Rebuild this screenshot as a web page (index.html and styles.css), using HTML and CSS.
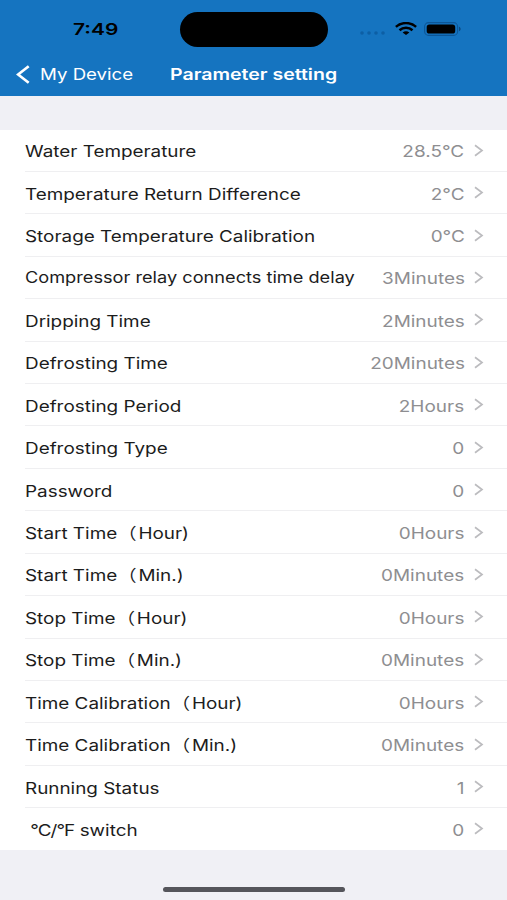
FILE: index.html
```html
<!DOCTYPE html>
<html lang="en">
<head>
<meta charset="utf-8">
<title>Parameter setting</title>
<link rel="stylesheet" href="styles.css">
</head>
<body>
<header class="header">
  <div class="status">
    <div class="clock"><span class="wide">7:49</span></div>
    <div class="island"></div>
    <div class="indicators">
      <svg class="dots" width="28" height="6" viewBox="0 0 28 6"><g fill="#0d5fa4"><circle cx="3" cy="3" r="1.8"/><circle cx="10" cy="3" r="1.8"/><circle cx="17" cy="3" r="1.8"/><circle cx="24" cy="3" r="1.8"/></g></svg>
      <svg class="wifi" width="22" height="13" viewBox="0 0 22 13"><g fill="none" stroke="#000" stroke-width="2.5"><path d="M.9 4.9C6.6-.2 15.4-.2 21.1 4.9"/><path d="M4.5 8.3C8.2 5 13.8 5 17.5 8.3"/></g><path d="M7.6 10.4C9.6 8.7 12.4 8.7 14.4 10.4L11 13Z"/></svg>
      <svg class="battery" width="38" height="14" viewBox="0 0 38 14"><rect x=".6" y=".6" width="33" height="12.8" rx="4" fill="none" stroke="#0d5696" stroke-width="1.1"/><rect x="2.7" y="2.4" width="28.5" height="9.2" rx="2.7"/><path d="M35 4.8c2.2.7 2.2 3.7 0 4.4Z" fill="#0b4a82"/></svg>
    </div>
  </div>
  <nav class="nav">
    <svg class="back" width="14" height="19" viewBox="0 0 14 19"><path d="M12.7 1.2 2.1 9.5l10.6 8.3" fill="none" stroke="#fff" stroke-width="2.7"/></svg>
    <div class="parent"><span class="wide">My Device</span></div>
    <h1 class="title"><span class="wide">Parameter setting</span></h1>
  </nav>
</header>
<main class="list" id="list"></main>
<footer class="footer"><div class="home"></div></footer>
<script src="app.js"></script>
</body>
</html>
```
FILE: app.js
```js
const rows = [
  ["Water Temperature", "28.5°C"],
  ["Temperature Return Difference", "2°C"],
  ["Storage Temperature Calibration", "0°C"],
  ["Compressor relay connects time delay", "3Minutes", "label-tight"],
  ["Dripping Time", "2Minutes"],
  ["Defrosting Time", "20Minutes"],
  ["Defrosting Period", "2Hours"],
  ["Defrosting Type", "0"],
  ["Password", "0"],
  ["Start Time（Hour)", "0Hours"],
  ["Start Time（Min.)", "0Minutes"],
  ["Stop Time（Hour)", "0Hours"],
  ["Stop Time（Min.)", "0Minutes"],
  ["Time Calibration（Hour)", "0Hours"],
  ["Time Calibration（Min.)", "0Minutes"],
  ["Running Status", "1"],
  [' <span class="unit">°C/°F</span> switch', "0"]
];
document.getElementById("list").innerHTML = rows.map(([label, value, extra = ""]) => `
  <div class="row">
    <span class="label ${extra}">${label.replace("（", '<span class="paren">（</span>')}</span>
    <span class="value">${value}</span>
    <svg class="chevron" width="10" height="13" viewBox="0 0 10 13"><path d="M1 1.3 8 6.5 1 11.7" fill="none" stroke="#bcbcbf" stroke-width="1.7"/></svg>
  </div>`).join("");
```
FILE: styles.css
```css
* { box-sizing: border-box; }
body {
  margin: 0;
  height: 900px;
  overflow: hidden;
  display: flex;
  flex-direction: column;
  background: #f0f0f5;
  font-family: Inter, "Noto Sans CJK SC", sans-serif;
  font-size: 16px;
  color: #1c1c1c;
}
.header {
  height: 95.5px;
  flex: none;
  background: #1574c0;
}
.wide {
  display: inline-block;
  white-space: pre;
  transform: scaleX(1.22);
  transform-origin: 0 50%;
}
.status {
  height: 58px;
  display: grid;
  grid-template-columns: 180px 148px 1fr;
  align-items: center;
}
.clock {
  padding-left: 73px;
  font-weight: 600;
  color: #000;
}
.clock .wide { transform: scaleX(1.31); }
.island {
  height: 35px;
  border-radius: 18px;
  background: #000;
  margin-top: 1px;
}
.indicators {
  display: flex;
  align-items: center;
  padding-left: 31px;
}
.dots { margin-top: 8px; }
.wifi { margin-left: 8px; margin-top: -1px; }
.battery { margin-left: 7px; margin-top: -1px; }
.nav {
  height: 32px;
  display: flex;
  align-items: center;
  padding-left: 16px;
  color: #fff;
}
.back { flex: none; }
.parent { width: 130px; margin-left: 10px; }
.parent .wide { transform: scaleX(1.165); }
.title {
  margin: 0;
  font-size: 16px;
  font-weight: 600;
}
.list {
  margin-top: 34px;
  background: #fff;
}
.row {
  height: 42.43px;
  margin-left: 25px;
  padding-right: 23px;
  display: flex;
  align-items: center;
  border-bottom: 1px solid #efeff1;
}
.row:last-child {
  height: 41.4px;
  border-bottom: 0;
}
.label {
  height: 20px;
  line-height: 20px;
  white-space: pre;
  transform: translateY(0.5px) scaleX(1.18);
  transform-origin: 0 50%;
}
.label-tight {
  font-size: 15.5px;
  transform: translateY(1px) scaleX(1.173);
}
.paren {
  margin-right: 1.5px;
  margin-left: 0.5px;
}
.unit { letter-spacing: -0.8px; }
.value {
  height: 20px;
  line-height: 20px;
  margin-left: auto;
  color: #8e8e91;
  transform: translateY(0.5px) scaleX(1.185);
  transform-origin: 100% 50%;
}
.chevron { margin-left: 9.5px; flex: none; }
.footer {
  flex: 1;
  display: flex;
  justify-content: center;
  align-items: flex-end;
  padding-bottom: 8px;
}
.home {
  width: 182px;
  height: 5px;
  border-radius: 3px;
  background: #55555b;
}
```
